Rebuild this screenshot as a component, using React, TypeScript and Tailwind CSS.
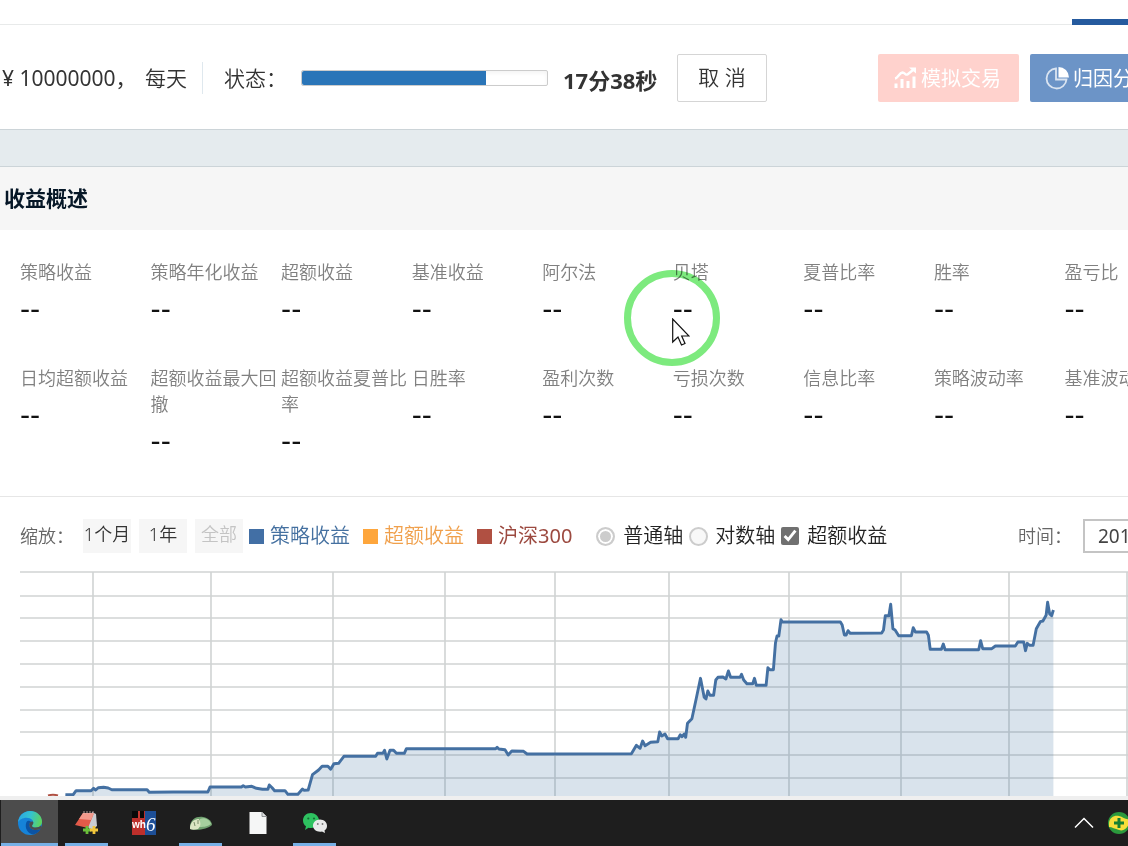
import { ReactNode } from 'react';
import clsx from 'clsx';

const metrics = [
  '策略收益',
  '策略年化收益',
  '超额收益',
  '基准收益',
  '阿尔法',
  '贝塔',
  '夏普比率',
  '胜率',
  '盈亏比',
  '日均超额收益',
  '超额收益最大回撤',
  '超额收益夏普比率',
  '日胜率',
  '盈利次数',
  '亏损次数',
  '信息比率',
  '策略波动率',
  '基准波动率',
];

const gridRows = [1, 25, 47, 70, 93, 116, 139, 161, 184, 207];
const gridColumns = [73, 191, 313, 425, 535, 649, 769, 881, 989, 1107];

const returns =
  '45.4,223.7 53.2,223.7 56.1,219.7 71.1,219.7 73.6,217.3 75.7,219 78.2,216.7 83.6,216.3 88.2,217 91.8,218.7 127.1,218.7 129.3,221.3 153.2,221 187.9,221 190,216 221.4,216 223.2,214.7 225.4,216 231.8,215.3 236.4,217.3 242.5,218.3 247.9,218.3 249.3,214 252.1,216.7 254.6,219.7 265,219.7 267.9,223.3 277.9,223.3 282.5,218 283.9,219.3 288.2,219 292.5,203.7 298.6,199 302.1,195.3 307.9,195.3 310.7,198.3 313.9,192.7 318.6,192.3 323.9,185.3 355.7,185.3 357.5,182.3 362.9,182.3 364.6,179.3 366.8,188 370,179.3 373.6,179.3 376.4,182.3 384.3,182.3 386.4,177.7 475.7,177.7 477.1,176.3 478.9,178 485,178.7 488.2,184 491.8,180 503.6,180.3 507.1,183 ' +
  '611.4,182.7 616.4,174.3 620.1,177.3 622.6,170 625.1,174.7 630.6,171.3 637.8,170.7 639.6,161 641.8,165 645,163 647.6,167.7 658.1,167.7 660.3,163.7 662.1,165.7 664.2,163 665.7,166.3 667.5,152.3 671.9,147.7 676.2,127.7 680.5,107.3 684.2,126.3 686,128 687.8,120 690,124.3 693.6,124.3 695.8,109 697.9,106.3 703,106 705.9,108 708.4,100 710.6,106.3 720,106.3 721.5,103.3 723.7,109 726.9,112.7 732.7,112.7 734.5,107.3 736.3,114.3 746.1,114.3 747.9,96.7 749.7,98.7 753.4,98.7 755.5,71.7 757,65 758.8,65 761,48.7 762.4,51 ' +
  '820.4,51 822.2,54 824.4,64 826.2,64 828,59.7 830.2,62.3 861.7,62 863.5,59 865.3,44.7 868.9,44.7 870.7,33.3 872.9,57.7 875.1,59 878.7,64.7 891.4,64.7 893.2,56.7 895.4,61 906.6,61 908.4,64.3 910.2,78.3 921.4,78.3 923.3,73 925.1,78.7 958.7,78.7 960.6,69.7 962.7,77.7 971.8,77.7 975.4,75 995.3,75 997.9,71 1003.7,71 1005.5,79.7 1007.3,72.3 1009.5,74.3 1013.1,74.3 1016.3,57.7 1020.3,50.7 1022.9,50 1026.1,44.3 1027.6,31.3 1029.7,43 1031.6,44.7 1033.4,39';

const TradeIcon = () => (
  <svg className="size-6 shrink-0" viewBox="0 0 24 24" fill="none" stroke="currentColor" strokeWidth="2.4">
    <path d="M2 12.5 C5 12 6 7 9.5 6.5 C12 6.5 12.5 9.5 14.5 8.5 L20 4" />
    <path d="M16 1.5 H23 V7.5 Z" fill="currentColor" stroke="none" />
    <path d="M3 17.5 V22 M9 13 V22 M15 15 V22 M21 10.5 V22" strokeWidth="3" />
  </svg>
);

const PieIcon = () => (
  <svg className="size-6 shrink-0" viewBox="0 0 24 24" fill="none">
    <path d="M11 2.5 A10 10 0 1 0 21.5 13.5 H11 Z" stroke="currentColor" strokeWidth="1.8" opacity="0.75" />
    <path d="M13.5 1 A10.5 10.5 0 0 1 24 11.5 H13.5 Z" fill="currentColor" />
  </svg>
);

const EdgeIcon = () => (
  <svg className="size-6" viewBox="0 0 24 24">
    <defs>
      <linearGradient id="edge-top" x1="0" y1="0.3" x2="1" y2="0.5">
        <stop offset="0" stopColor="#2ba6e4" />
        <stop offset="0.5" stopColor="#34c3cf" />
        <stop offset="1" stopColor="#5fd35a" />
      </linearGradient>
    </defs>
    <circle cx="12" cy="12" r="12" fill="#1683d8" />
    <path d="M0 11.5 C.5 5 5.500 0 12 0 C19 0 24 5 24 10.500 C24 14.500 21 16.500 17.500 16.500 C14 16.500 13.500 15 14.500 13.800 C17 10 13 6.800 8.500 6.800 C4.500 6.800 1 9 0 11.500 Z" fill="url(#edge-top)" />
    <path d="M8.500 11 C6 17 10 23 15.500 23.500 C19 22.500 21.500 20.500 22.600 18 C17 20.500 11.500 18.500 11.200 14 C11 12.500 11.800 11.200 13 10.500 C11.500 9.500 9.500 9.500 8.500 11 Z" fill="#0b53a3" />
    <path d="M14.500 13.800 C13.500 15 14 16.500 17.500 16.500 C20 16.500 22 15.700 23 14.500 C23.800 16 23.300 17.300 22.600 18 C17 20.500 11.500 18.500 11.200 14 C11 11.500 13.500 9.800 15.200 11 C15.600 12 15.200 13 14.500 13.800 Z" fill="#4c4c4c" />
  </svg>
);

const NotebookIcon = () => (
  <svg className="size-6" viewBox="0 0 24 24">
    <path d="M17 1 L21 3 L22 15 L16 20 L13 16 Z" fill="#c9cdd2" />
    <path d="M8 2 L19 2 L13 17 L0 14 Z" fill="#e25a49" />
    <path d="M8 2 L19 2 L16 9 L4 8 Z" fill="#f3998b" />
    <path d="M9 0 V3 M12 0 V3 M15 0 V3 M18 0 V3" stroke="#d9b9b4" strokeWidth="0.8" />
    <path d="M12 15 V23 M8 19 H16" stroke="#6abf3a" strokeWidth="2.8" />
    <path d="M19 15 V23 M15 19 H23" stroke="#f2c63b" strokeWidth="2.8" />
  </svg>
);

const Wh6Icon = () => (
  <svg className="size-6" viewBox="0 0 24 24">
    <rect width="24" height="24" fill="#bd2f2b" />
    <rect width="12" height="7" fill="#090909" />
    <rect x="13" width="11" height="24" fill="#1d4f97" />
    <path d="M6 0 H8 V7 H6 Z" fill="#c63a31" />
    <text x="0" y="17" fill="#fff" fontSize="10" fontWeight="700" fontFamily="Liberation Sans, sans-serif">wh</text>
    <text x="14" y="20" fill="#fff" fontSize="19" fontStyle="italic" fontFamily="Liberation Serif, serif">6</text>
  </svg>
);

const ShellIcon = () => (
  <svg className="size-6" viewBox="0 0 24 24">
    <path d="M1 16 C1 8 8 5 14 6 C20 7 23 11 23 14 C19 18 8 20 1 18 Z" fill="#6fa06f" />
    <path d="M11 8 C16 6 21 9 22 13 C18 16 13 16 10 16 Z" fill="#a5cf9e" />
    <path d="M1 16 C2 10 6 8 10 8 C12 12 12 15 9 18 C6 19 3 19 1 18 Z" fill="#dbe5c3" />
    <path d="M5 11 L6 15 M9 9 L9 13" stroke="#5f7650" strokeWidth="0.8" />
  </svg>
);

const FileIcon = () => (
  <svg className="size-6" viewBox="0 0 24 24">
    <path d="M3.500 1 H16 L20.500 5.500 V23 H3.500 Z" fill="#f5f6f6" />
    <path d="M16 1 V5.500 H20.500" fill="#dfe1e2" stroke="#7c8083" strokeWidth="0.8" />
  </svg>
);

const WeChatIcon = () => (
  <svg className="size-6" viewBox="0 0 24 24">
    <path d="M8 2 C3 2 0 5.500 0 9.500 C0 12 1 14 3 15.300 L2 19 L5.500 16.700 C13 18 16.500 13.500 16 9 C15.500 5 12 2 8 2 Z" fill="#2ec160" />
    <circle cx="5.300" cy="7.500" r="1.100" fill="#176c36" />
    <circle cx="11" cy="7.500" r="1.100" fill="#176c36" />
    <path d="M17 8.500 C13 8.500 10 11.300 10 14.700 C10 18.500 14 21.500 19 20.500 L22 22 L21.500 19.500 C23.300 18.300 24 16.700 24 14.700 C24 11.300 21 8.500 17 8.500 Z" fill="#e9eaea" />
    <circle cx="14.800" cy="13" r="0.900" fill="#777" />
    <circle cx="19.500" cy="13" r="0.900" fill="#777" />
  </svg>
);

const SafeguardIcon = () => (
  <svg className="size-[22px] shrink-0" viewBox="0 0 22 22">
    <circle cx="11" cy="11" r="11" fill="#2b9a3d" />
    <path d="M1 12 C1 5 7 3 11 4 C15 5 18 8 21 7 C22 14 17 20 11 18 C7 17 4 15 1 15 Z" fill="#f7de3a" />
    <path d="M11 6 V16 M6 11 H16" stroke="#168032" strokeWidth="3" />
  </svg>
);

const apps = [
  { name: 'Microsoft Edge', icon: <EdgeIcon />, running: true, active: true },
  { name: 'Notebook', icon: <NotebookIcon />, running: true, active: false },
  { name: 'WH6', icon: <Wh6Icon />, running: false, active: false },
  { name: 'Shell', icon: <ShellIcon />, running: true, active: false },
  { name: 'File', icon: <FileIcon />, running: false, active: false },
  { name: 'WeChat', icon: <WeChatIcon />, running: true, active: false },
];

const ZoomButton = ({ children, disabled = false }: { children: ReactNode; disabled?: boolean }) => (
  <button
    disabled={disabled}
    className="h-[34px] w-12 whitespace-nowrap bg-[#f6f6f6] pb-1 text-lg leading-6 text-[#333] disabled:text-[#c4c4c4]"
  >
    {children}
  </button>
);

const StatusBar = () => (
  <section className="flex h-[105px] items-center whitespace-nowrap border-b border-[#ccd4d8] pt-0.5 text-[21px] text-[#333]">
    <p className="w-[143px] shrink-0 pt-0.5 pl-0.5 font-normal">¥ 10000000，</p>
    <p className="flex h-8 w-[60px] shrink-0 items-center border-r border-[#dfe8ee] pt-0.5 pl-0.5">每天</p>
    <p className="w-[98px] shrink-0 pt-0.5 pl-[21px]">状态：</p>
    <div className="h-4 w-[247px] shrink-0 rounded-xs border border-[#ccc] shadow-inner">
      <div className="h-full w-3/4 rounded-l-xs bg-[#2a75b8]" />
    </div>
    <strong className="ml-[15px] w-[114px] shrink-0 pt-1 text-[22px] font-bold">17分38秒</strong>
    <button className="h-12 w-[90px] shrink-0 rounded-xs border border-[#d5d5d5] text-[21px]">取 消</button>
    <button className="ml-[111px] flex h-12 w-[141px] shrink-0 items-center gap-1 rounded-xs bg-[#ffd2cd] pl-[15px] text-[20px] font-normal text-white">
      <TradeIcon />
      <span className="pt-0.5">模拟交易</span>
    </button>
    <button className="ml-[11px] flex h-12 w-[141px] shrink-0 items-center gap-1 rounded-xs bg-[#6c94c7] pl-[15px] text-[20px] font-normal text-white">
      <PieIcon />
      <span className="pt-0.5">归因分析</span>
    </button>
  </section>
);

const Overview = () => (
  <section className="border-b border-[#e6e6e6]">
    <h2 className="bg-[#f6f6f6] py-4 pl-1 text-[21px] leading-[31px] font-bold text-[#061727]">收益概述</h2>
    <dl className="-mr-[67px] ml-5 grid grid-cols-9 gap-y-[42px] pt-[29px] pb-[41px]">
      {metrics.map((label) => (
        <div key={label}>
          <dt className="text-lg leading-[26px] text-[#808080]">{label}</dt>
          <dd className="mt-3 font-['DejaVu_Sans',sans-serif] text-[28px] leading-[26px] font-normal text-[#111]">--</dd>
        </div>
      ))}
    </dl>
  </section>
);

const ChartControls = () => (
  <div className="flex h-[74px] items-center whitespace-nowrap pt-1 pl-5 text-[20px] text-[#222]">
    <span className="w-[63px] shrink-0 text-lg text-[#666]">缩放：</span>
    <div className="flex shrink-0 gap-2">
      <ZoomButton>1个月</ZoomButton>
      <ZoomButton>1年</ZoomButton>
      <ZoomButton disabled>全部</ZoomButton>
    </div>
    <ul className="ml-[6px] flex shrink-0 gap-[13px]">
      <li className="flex items-center gap-[6px] text-[#4470a0]">
        <i className="size-[15px] bg-[#426fa5]" />
        策略收益
      </li>
      <li className="flex items-center gap-[6px] text-[#f0a04c]">
        <i className="size-[15px] bg-[#fea63c]" />
        超额收益
      </li>
      <li className="flex items-center gap-[6px] font-normal text-[#9c4a40]">
        <i className="size-[15px] bg-[#b05042]" />
        沪深300
      </li>
    </ul>
    <div className="ml-6 flex shrink-0 gap-[6px]">
      <label className="flex items-center gap-2">
        <input
          type="radio"
          name="axis"
          defaultChecked
          disabled
          className="size-[19px] appearance-none rounded-full border-2 border-[#ccc] bg-[#ccc] shadow-[inset_0_0_0_2px_white]"
        />
        普通轴
      </label>
      <label className="flex items-center gap-[7px]">
        <input
          type="radio"
          name="axis"
          disabled
          className="size-[19px] appearance-none rounded-full border-2 border-[#ccc] bg-[#f8f8f8]"
        />
        对数轴
      </label>
      <label className="flex items-center gap-2">
        <input type="checkbox" defaultChecked className="size-[18px] accent-[#707070]" />
        超额收益
      </label>
    </div>
    <label className="ml-auto flex shrink-0 items-center text-lg text-[#666]">
      <span className="w-[65px]">时间：</span>
      <input
        type="text"
        defaultValue="201"
        className="-mr-20 h-[34px] w-[125px] border-2 border-[#c4c4c4] bg-white pl-[13px] text-[19px] font-normal text-[#444]"
      />
    </label>
  </div>
);

const ReturnsChart = () => (
  <div className="border-b-4 border-[#efefef] pl-5">
    <svg className="block h-auto w-full" viewBox="0 0 1108 225" role="img" aria-label="策略收益">
      <g stroke="#d0d3d3" strokeWidth="1.600">
        {gridRows.map((y) => (
          <line key={y} x1="0" x2="1108" y1={y} y2={y} />
        ))}
        {gridColumns.map((x) => (
          <line key={x} x1={x} x2={x} y1="1" y2="225" />
        ))}
      </g>
      <polygon points={`45.4,225 ${returns} 1033.4,225`} fill="#41759f" fillOpacity="0.2" />
      <polyline points={returns} fill="none" stroke="#4470a2" strokeWidth="2.900" strokeLinejoin="round" />
      <path d="M28 224.500 Q33 223 38 224.500" fill="none" stroke="#b05042" strokeWidth="2" />
    </svg>
  </div>
);

const Taskbar = () => (
  <footer className="flex h-[46px] bg-[#1e1e1e] pl-px">
    {apps.map((app) => (
      <button
        key={app.name}
        aria-label={app.name}
        className={clsx('flex w-[57px] flex-col items-center justify-between', app.active && 'bg-[#4c4c4c]')}
      >
        <span className="flex h-[43px] items-center pt-[3px]">{app.icon}</span>
        {app.running && <span className={clsx('h-[3px] bg-[#76b0e6]', app.active ? 'w-full' : 'w-[43px]')} />}
      </button>
    ))}
    <div className="ml-auto -mr-0.5 flex items-center gap-[14px]">
      <svg className="w-5" viewBox="0 0 20 12" fill="none" stroke="#fff" strokeWidth="1.500">
        <path d="M1 10.500 L10 1.500 L19 10.500" />
      </svg>
      <SafeguardIcon />
    </div>
  </footer>
);

const Pointer = () => (
  <div className="pointer-events-none absolute top-[270px] left-[624px] size-24">
    <div className="size-full rounded-full border-[7px] border-[#7dea7e] mix-blend-multiply" />
    <svg className="absolute top-12 left-12 w-[18px]" viewBox="0 0 18 28" fill="#fff" stroke="#111" strokeWidth="1.200">
      <path d="M.7 1 V24 L6 19 L9.500 27 L13 25.500 L9.700 18 H17 Z" />
    </svg>
  </div>
);

const App = () => {
  return (
    <div className="relative overflow-hidden bg-white font-['Noto_Sans','Noto_Sans_CJK_SC',sans-serif] font-[350]">
      <nav className="flex h-[25px] items-end justify-end border-b border-[#e8eaea]">
        <a href="#report" aria-label="收益概述" className="-mb-px h-1.5 w-14 bg-[#255a9e]" />
      </nav>
      <main>
        <StatusBar />
        <div className="h-[37px] border-b border-[#ccd4d8] bg-[#e5ebee]" />
        <Overview />
        <ChartControls />
        <ReturnsChart />
      </main>
      <Taskbar />
      <Pointer />
    </div>
  );
};

export default App;
